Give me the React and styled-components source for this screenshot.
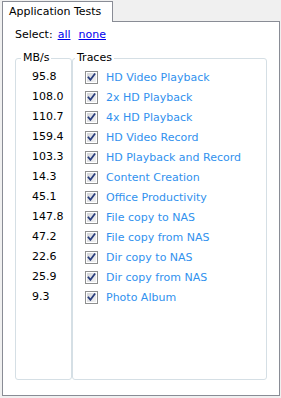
import React from "react";
import styled, { createGlobalStyle } from "styled-components";

const GlobalStyle = createGlobalStyle`
  html, body {
    margin: 0;
    background: #f0f0f0;
  }
  body {
    font-family: "DejaVu Sans", Verdana, sans-serif;
    font-size: 11px;
    color: #000;
  }
`;

const traces = [
  { rate: "95.8", name: "HD Video Playback" },
  { rate: "108.0", name: "2x HD Playback" },
  { rate: "110.7", name: "4x HD Playback" },
  { rate: "159.4", name: "HD Video Record" },
  { rate: "103.3", name: "HD Playback and Record" },
  { rate: "14.3", name: "Content Creation" },
  { rate: "45.1", name: "Office Productivity" },
  { rate: "147.8", name: "File copy to NAS" },
  { rate: "47.2", name: "File copy from NAS" },
  { rate: "22.6", name: "Dir copy to NAS" },
  { rate: "25.9", name: "Dir copy from NAS" },
  { rate: "9.3", name: "Photo Album" },
];

const Window = styled.div`
  padding: 1px 1px 0 2px;
`;

const Tab = styled.div`
  position: relative;
  z-index: 1;
  box-sizing: border-box;
  width: 111px;
  height: 21px;
  margin-bottom: -1px;
  padding: 3px 0 0 6px;
  line-height: 14px;
  background: #fff;
  border: 1px solid #898c95;
  border-bottom: none;
`;

const Panel = styled.div`
  box-sizing: border-box;
  height: 375px;
  padding: 6px 12px 0 12px;
  background: #fff;
  border: 1px solid #898c95;
`;

const SelectRow = styled.div`
  height: 14px;
  line-height: 14px;
`;

const Link = styled.a`
  color: #0000ee;
  text-decoration: underline;
  margin-left: ${(p) => p.$gap}px;
  cursor: pointer;
`;

const Columns = styled.div`
  display: flex;
  margin-top: 9px;
`;

const Group = styled.fieldset`
  box-sizing: border-box;
  width: ${(p) => p.$width}px;
  height: 329px;
  margin: 0;
  padding: 0;
  border: 1px solid #d5dfe5;
  border-radius: 3px;
  min-inline-size: 0;
`;

const Legend = styled.legend`
  margin-left: ${(p) => p.$offset}px;
  padding: 0 2px;
  line-height: 14px;
`;

const List = styled.div`
  display: flex;
  flex-direction: column;
  padding: 2px 0 0 ${(p) => p.$indent}px;
`;

const Rate = styled.div`
  height: 20px;
  line-height: 20px;
`;

const TraceRow = styled.label`
  display: flex;
  align-items: center;
  height: 20px;
  gap: 8px;
  color: #3191ee;
`;

const Box = styled.svg`
  flex: none;
  display: block;
`;

function CheckBox() {
  return (
    <Box width="13" height="13" viewBox="0 0 13 13">
      <defs>
        <linearGradient id="cbfill" x1="0" y1="0" x2="1" y2="1">
          <stop offset="0" stopColor="#d2d4d8" />
          <stop offset="1" stopColor="#f2f2f4" />
        </linearGradient>
      </defs>
      <rect x="0.5" y="0.5" width="12" height="12" fill="#fff" stroke="#8e8f8f" />
      <rect x="2" y="2" width="9" height="9" fill="url(#cbfill)" />
      <path
        d="M3.4 6.4 L5.4 8.8 L9.6 3.2"
        fill="none"
        stroke="#283c7c"
        strokeWidth="1.7"
        strokeLinecap="square"
      />
    </Box>
  );
}

export default function App() {
  return (
    <>
      <GlobalStyle />
      <Window>
        <Tab>Application Tests</Tab>
        <Panel>
          <SelectRow>
            Select:
            <Link $gap={5}>all</Link>
            <Link $gap={8}>none</Link>
          </SelectRow>
          <Columns>
            <Group $width={57}>
              <Legend $offset={5}>MB/s</Legend>
              <List $indent={16}>
                {traces.map((t) => (
                  <Rate key={t.name}>{t.rate}</Rate>
                ))}
              </List>
            </Group>
            <Group $width={195}>
              <Legend $offset={2}>Traces</Legend>
              <List $indent={12}>
                {traces.map((t) => (
                  <TraceRow key={t.name}>
                    <CheckBox />
                    {t.name}
                  </TraceRow>
                ))}
              </List>
            </Group>
          </Columns>
        </Panel>
      </Window>
    </>
  );
}
